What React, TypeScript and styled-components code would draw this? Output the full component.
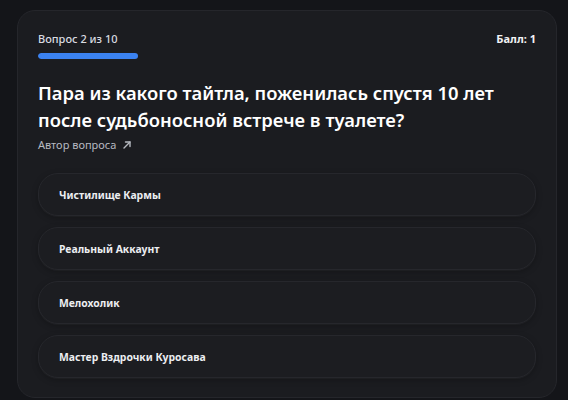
import styled, { createGlobalStyle } from 'styled-components';

const GlobalStyle = createGlobalStyle`
  html, body {
    margin: 0;
    padding: 0;
    background: #141519;
  }
  body {
    font-family: 'Noto Sans', 'Open Sans', sans-serif;
    color: #f2f3f5;
  }
`;

const Page = styled.main`
  padding: 10px 11px 0 17px;
  height: 400px;
  box-sizing: border-box;
  overflow: hidden;
`;

const QuizCard = styled.section`
  box-sizing: border-box;
  width: 540px;
  height: 388px;
  padding: 20px 20px 19px;
  border-radius: 18px;
  background: #1b1c20;
  border: 1px solid #25262b;
  display: flex;
  flex-direction: column;
`;

const CardHeader = styled.header`
  display: flex;
  justify-content: space-between;
  align-items: center;
`;

const StepLabel = styled.span`
  font-size: 11px;
  font-weight: 500;
  line-height: 16px;
  color: #d9dbe0;
`;

const Score = styled.span`
  font-size: 11px;
  font-weight: 700;
  line-height: 16px;
  color: #f2f3f5;
`;

const ProgressTrack = styled.div`
  margin-top: 6px;
  width: 100%;
  height: 6px;
  border-radius: 3px;
  background: transparent;
  overflow: hidden;
`;

const ProgressFill = styled.div`
  height: 100%;
  border-radius: 3px;
  background: #3b82f0;
`;

const Question = styled.h1`
  margin: 20px 0 0;
  font-size: 18.4px;
  font-weight: 600;
  line-height: 27px;
  color: #ffffff;
`;

const AuthorLink = styled.a`
  margin-top: 4px;
  display: inline-flex;
  align-items: center;
  gap: 6px;
  align-self: flex-start;
  font-size: 11px;
  line-height: 16px;
  color: #b6b9c0;
  text-decoration: none;
  cursor: pointer;
`;

const Options = styled.ul`
  list-style: none;
  margin: 20px 0 0;
  padding: 0;
  display: flex;
  flex-direction: column;
  gap: 11px;
`;

const OptionButton = styled.button`
  box-sizing: border-box;
  width: 100%;
  height: 43px;
  padding: 0 20px;
  display: flex;
  align-items: center;
  border-radius: 20px;
  border: 1px solid #26272c;
  background: #1c1d21;
  box-shadow: 0 1px 0 rgba(255, 255, 255, 0.03), 0 2px 6px rgba(0, 0, 0, 0.25);
  font-family: inherit;
  font-size: 10.4px;
  font-weight: 700;
  color: #eceef1;
  text-align: left;
  cursor: pointer;

  &:hover {
    border-color: #33353c;
  }
`;

const options = [
  'Чистилище Кармы',
  'Реальный Аккаунт',
  'Мелохолик',
  'Мастер Вздрочки Куросава',
];

const current = 2;
const total = 10;

export default function App() {
  return (
    <>
      <GlobalStyle />
      <Page>
        <QuizCard>
          <CardHeader>
            <StepLabel>
              Вопрос {current} из {total}
            </StepLabel>
            <Score>Балл: 1</Score>
          </CardHeader>
          <ProgressTrack>
            <ProgressFill style={{ width: `${(current / total) * 100}%` }} />
          </ProgressTrack>
          <Question>
            Пара из какого тайтла, поженилась спустя 10 лет
            <br />
            после судьбоносной встрече в туалете?
          </Question>
          <AuthorLink>
            Автор вопроса
            <svg width="10" height="10" viewBox="0 0 10 10" fill="none" stroke="currentColor" strokeWidth="1.4" strokeLinecap="round" strokeLinejoin="round">
              <path d="M2 8 L8 2" />
              <path d="M3.5 2 H8 V6.5" />
            </svg>
          </AuthorLink>
          <Options>
            {options.map((label) => (
              <li key={label}>
                <OptionButton type="button">{label}</OptionButton>
              </li>
            ))}
          </Options>
        </QuizCard>
      </Page>
    </>
  );
}
